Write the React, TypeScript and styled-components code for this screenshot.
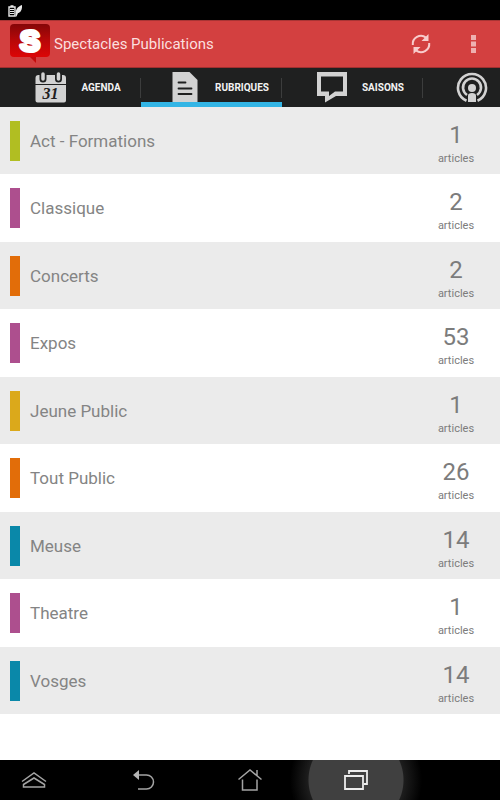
import React from "react";
import styled, { createGlobalStyle } from "styled-components";

const GlobalStyle = createGlobalStyle`
  *, *::before, *::after { box-sizing: border-box; }
  body { margin: 0; background: #fff; font-family: Roboto, "Liberation Sans", sans-serif; }
  button { font: inherit; color: inherit; border: 0; padding: 0; background: none; cursor: pointer; }
  svg { display: block; flex: none; }
`;

const Screen = styled.div`
  display: flex;
  flex-direction: column;
  min-height: 100vh;
  overflow-x: hidden;
`;

const StatusBar = styled.div`
  display: flex;
  align-items: center;
  height: 20px;
  padding: 2px 8px 0;
  background: #000;
`;

const ActionBar = styled.header`
  display: flex;
  align-items: center;
  height: 48px;
  padding-left: 10px;
  background: #d34040;
  border-top: 1px solid #a93434;
  border-bottom: 1px solid #a02f2f;
`;

const Title = styled.h1`
  flex: 1;
  margin: 0 0 0 4px;
  font-size: 15px;
  font-weight: 400;
  line-height: 20px;
  color: #fbdfdf;
`;

const ActionButton = styled.button`
  display: flex;
  align-items: center;
  justify-content: center;
  width: 53px;
  height: 46px;
`;

const Tabs = styled.nav`
  display: flex;
  height: 39px;
  overflow: hidden;
  background: #1f2020;
`;

const Tab = styled.button<{ $active?: boolean }>`
  display: flex;
  flex: 0 0 141px;
  align-items: center;
  justify-content: center;
  gap: 14px;
  padding: 1px 0 0 15px;
  color: #f2f2f2;
  font-size: 10px;
  font-weight: 700;
  line-height: 16px;
  background: ${(p) => (p.$active ? "linear-gradient(#33b5e5, #33b5e5) bottom / 100% 5px no-repeat" : "none")};
`;

const IconTab = styled(Tab)`
  justify-content: flex-start;
  padding-left: 33px;
`;

const Separator = styled.span`
  flex: none;
  align-self: center;
  width: 1px;
  height: 20px;
  margin-left: -1px;
  background: #3c3d3d;
`;

const List = styled.ul`
  flex: 1;
  margin: 0;
  padding: 0;
  list-style: none;
  background: #fff;
`;

const Row = styled.li`
  display: flex;
  align-items: center;
  height: 67px;
  padding: 0 10px;
  background: #ebebeb;

  &:nth-child(even) {
    height: 68px;
    background: #fff;
  }
`;

const Swatch = styled.span<{ $color: string }>`
  width: 10px;
  height: 40px;
  background: ${(p) => p.$color};
`;

const Name = styled.span`
  flex: 1;
  margin-left: 10px;
  font-size: 17px;
  line-height: 24px;
  color: #848484;
`;

const Count = styled.span`
  display: flex;
  flex-direction: column;
  align-items: center;
  width: 68px;
  padding-top: 8px;
  color: #7c7c7c;
`;

const Amount = styled.span`
  font-size: 24px;
  line-height: 28px;
`;

const Unit = styled.span`
  font-size: 11px;
  line-height: 20px;
`;

const SystemBar = styled.nav`
  display: grid;
  grid-template-columns: 91px repeat(3, 1fr);
  height: 40px;
  padding-right: 91px;
  overflow: hidden;
  background: #000;
`;

const SystemButton = styled.button`
  position: relative;
  display: flex;
  align-items: center;
  justify-content: center;
`;

const DrawerButton = styled(SystemButton)`
  padding-right: 23px;
`;

const PressedButton = styled(SystemButton)`
  &::before {
    content: "";
    position: absolute;
    inset: 0 -20px;
    background: radial-gradient(circle, #404040 47px, #1d1d1d 48px, #000 66px);
  }

  svg {
    position: relative;
  }
`;

const BatteryIcon = () => (
  <svg width="14" height="12" viewBox="0 0 14 12" fill="none" stroke="#e8e8e8">
    <path d="M1 2h6v9H1zM2.500 1h3" strokeWidth="1.400" />
    <path d="M2 4.500h4M2 6.500h4M2 8.500h4" />
    <path d="M8 8C7.500 4 10 1.500 14 0C14.500 4 12.500 8 10 8L8.500 11.500H7.500Z" fill="#e8e8e8" stroke="none" />
  </svg>
);

const Logo = () => (
  <svg width="40" height="40" viewBox="0 0 40 40" role="img" aria-label="Spectacles Publications logo">
    <defs>
      <linearGradient id="logo-red" x1="0" y1="0" x2="0" y2="1">
        <stop offset="0" stopColor="#850608" />
        <stop offset="0.5" stopColor="#b80708" />
        <stop offset="1" stopColor="#dc0606" />
      </linearGradient>
    </defs>
    <path d="M19 32h7v7z" fill="#c40c0c" />
    <rect y="0" width="40" height="33" rx="4" fill="url(#logo-red)" />
    <text
      x="20"
      y="27"
      textAnchor="middle"
      fontFamily="'Liberation Sans', sans-serif"
      fontWeight="700"
      fontSize="30"
      fill="#fff"
      stroke="#fff"
      strokeWidth="4"
      strokeLinejoin="round"
    >
      S
    </text>
  </svg>
);

const RefreshIcon = () => (
  <svg width="20" height="22" viewBox="0 0 20 22" fill="none" stroke="#f8cccc" strokeWidth="2">
    <path d="M1.800 12A8.200 8.200 0 0 1 15 4.600M18.200 10A8.200 8.200 0 0 1 5 17.400" />
    <path d="M17.500 1v7h-7zM2.500 21v-7h7z" fill="#f8cccc" stroke="none" />
  </svg>
);

const OverflowIcon = () => (
  <svg width="5" height="18" viewBox="0 0 5 18" fill="#eeb0b0">
    <path d="M0 0h5v5H0zM0 6.500h5v5H0zM0 13h5v5H0z" />
  </svg>
);

const CalendarIcon = () => (
  <svg width="32" height="32" viewBox="0 0 32 32">
    <path d="M0.500 12V6q0-3 3-3h24.500q3 0 3 3v6zM0.500 13h30.500v15.500q0 2-2 2H2.500q-2 0-2-2z" fill="#d2d2d2" />
    <path d="M8 2v5M23.500 2v5" stroke="#1f2020" strokeWidth="7" strokeLinecap="round" />
    <path d="M8 2v5M23.500 2v5" stroke="#d2d2d2" strokeWidth="3.500" strokeLinecap="round" />
    <text
      x="15.500"
      y="27"
      textAnchor="middle"
      fontFamily="'Liberation Serif', serif"
      fontStyle="italic"
      fontWeight="700"
      fontSize="16"
      fill="#1f2020"
    >
      31
    </text>
  </svg>
);

const DocumentIcon = () => (
  <svg width="32" height="32" viewBox="0 0 32 32">
    <path d="M3.500 0h17l8 8v22h-25z" fill="#d2d2d2" />
    <path d="M9.500 10.500h7M9.500 16.500h13M9.500 22h13" stroke="#1f2020" strokeWidth="1.800" strokeLinecap="round" />
  </svg>
);

const SpeechIcon = () => (
  <svg width="32" height="32" viewBox="0 0 32 32">
    <path
      d="M1 0h30v24H20L9 30.500V24H1zM5 4.500v15h8V24l6-4.500h8v-15z"
      fill="#d2d2d2"
      fillRule="evenodd"
    />
  </svg>
);

const PodcastIcon = () => (
  <svg width="32" height="32" viewBox="0 0 32 32" fill="none" stroke="#d2d2d2" strokeWidth="2.600">
    <path d="M10.500 28.800A14 14 0 1 1 21.500 28.800" />
    <path d="M11 23A9 9 0 1 1 21 23" />
    <circle cx="16" cy="16" r="4" fill="#d2d2d2" stroke="none" />
    <path d="M12 30v-6.500q0-2.500 4-2.500t4 2.500v6.500z" fill="#d2d2d2" stroke="none" />
  </svg>
);

const DrawerIcon = () => (
  <svg width="26" height="18" viewBox="0 0 26 18" fill="none" stroke="#a4a4a4" strokeWidth="1.500">
    <path d="M1 10.500L13 2l12 8.500" />
    <path d="M2.500 13.500L13 7l10.500 6.500v2.500h-21z" />
  </svg>
);

const BackIcon = () => (
  <svg width="24" height="22" viewBox="0 0 24 22" fill="none" stroke="#a4a4a4" strokeWidth="1.500">
    <path d="M5 6h9.500a7 7 0 0 1 0 14H6" />
    <path d="M1 6l6-5v10z" fill="#b4b4b4" stroke="none" />
  </svg>
);

const HomeIcon = () => (
  <svg width="24" height="24" viewBox="0 0 24 24" fill="none" stroke="#a4a4a4" strokeWidth="1.500">
    <path d="M0.500 11.500L12 2l11.500 9.500M19 7.500V2M4.500 11.500v10.500H19V11.500" />
  </svg>
);

const RecentIcon = () => (
  <svg width="24" height="22" viewBox="0 0 24 22" fill="none" stroke="#ececec" strokeWidth="1.800">
    <path d="M1 7h18v13H1z" />
    <path d="M5 5V2h18v13h-3" />
  </svg>
);

const categories = [
  { name: "Act - Formations", count: 1, color: "#b1be22" },
  { name: "Classique", count: 2, color: "#ad4f8e" },
  { name: "Concerts", count: 2, color: "#e26d09" },
  { name: "Expos", count: 53, color: "#ad4f8e" },
  { name: "Jeune Public", count: 1, color: "#dba91b" },
  { name: "Tout Public", count: 26, color: "#e26d09" },
  { name: "Meuse", count: 14, color: "#0a88a9" },
  { name: "Theatre", count: 1, color: "#ad4f8e" },
  { name: "Vosges", count: 14, color: "#0a88a9" },
];

export default function App() {
  return (
    <Screen>
      <GlobalStyle />
      <StatusBar>
        <BatteryIcon />
      </StatusBar>
      <ActionBar>
        <Logo />
        <Title>Spectacles Publications</Title>
        <ActionButton aria-label="Actualiser">
          <RefreshIcon />
        </ActionButton>
        <ActionButton aria-label="Plus d'options">
          <OverflowIcon />
        </ActionButton>
      </ActionBar>
      <Tabs>
        <Tab>
          <CalendarIcon />
          AGENDA
        </Tab>
        <Separator />
        <Tab $active aria-current="page">
          <DocumentIcon />
          RUBRIQUES
        </Tab>
        <Separator />
        <Tab>
          <SpeechIcon />
          SAISONS
        </Tab>
        <Separator />
        <IconTab aria-label="Podcasts">
          <PodcastIcon />
        </IconTab>
      </Tabs>
      <List>
        {categories.map((category) => (
          <Row key={category.name}>
            <Swatch $color={category.color} />
            <Name>{category.name}</Name>
            <Count>
              <Amount>{category.count}</Amount>
              <Unit>articles</Unit>
            </Count>
          </Row>
        ))}
      </List>
      <SystemBar>
        <DrawerButton aria-label="Applications">
          <DrawerIcon />
        </DrawerButton>
        <SystemButton aria-label="Retour">
          <BackIcon />
        </SystemButton>
        <SystemButton aria-label="Accueil">
          <HomeIcon />
        </SystemButton>
        <PressedButton aria-label="Applications récentes">
          <RecentIcon />
        </PressedButton>
      </SystemBar>
    </Screen>
  );
}
